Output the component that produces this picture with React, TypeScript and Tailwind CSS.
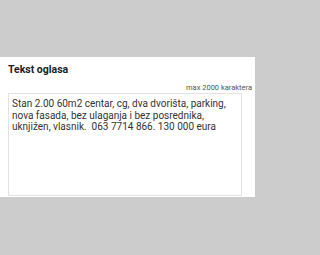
import React from 'react';

const opis =
  'Stan 2.00 60m2 centar, cg, dva dvorišta, parking, nova fasada, bez ulaganja i bez posrednika, uknjižen, vlasnik.  063 7714 866. 130 000 eura';

function App() {
  return (
    <div className="min-h-screen w-full bg-[#cccccc] font-['Roboto',sans-serif]">
      <div className="h-[255px] w-[255px] overflow-hidden">
        <div className="h-[57px]" />

        {/* Tekst oglasa */}
        <div className="h-[140px] bg-white pl-[8px] pr-[3px] pt-[6px]">
          <h2 className="text-[10.5px] leading-[13px] font-bold text-[#222]">Tekst oglasa</h2>
          <p className="mt-[7px] text-right text-[7.5px] leading-[9px] text-[#555]">max 2000 karaktera</p>
          <textarea
            readOnly
            value={opis}
            className="mt-[1px] block h-[103px] w-[234px] resize-none border border-[#e2e2e2] px-[3px] pt-[4px] text-[10px] leading-[11.5px] text-[#333] outline-none"
          />
        </div>
      </div>
    </div>
  );
}

export default App;
